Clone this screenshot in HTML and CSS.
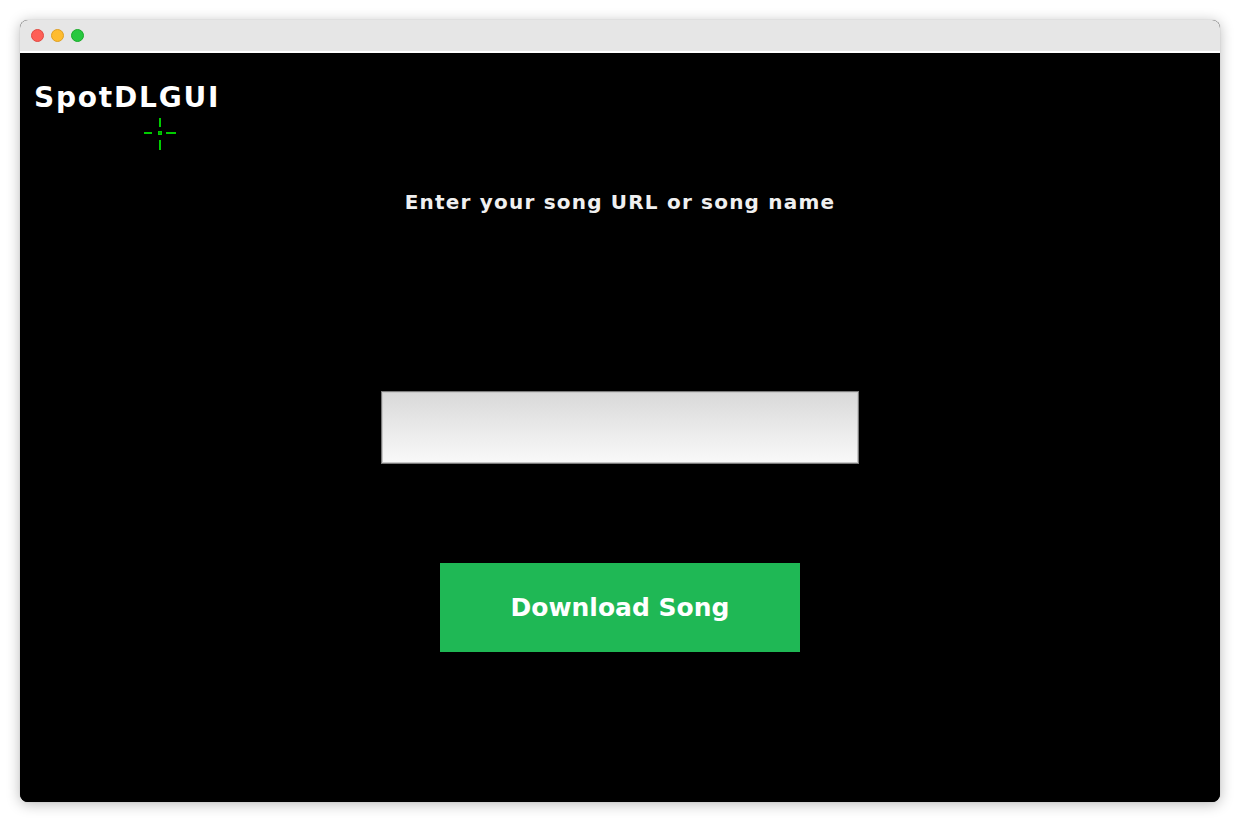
FILE: index.html
```html
<!DOCTYPE html>
<html lang="en">
<head>
<meta charset="utf-8">
<title>SpotDLGUI</title>
<link rel="stylesheet" href="styles.css">
</head>
<body>
<div class="window">
  <div class="titlebar">
    <span class="light red"></span>
    <span class="light yellow"></span>
    <span class="light green"></span>
  </div>
  <div class="content">
    <h1 class="app-title">SpotDLGUI</h1>
    <p class="prompt">Enter your song URL or song name</p>
    <input class="song-input" type="text" aria-label="Song URL or name">
    <button class="download-btn" type="button">Download Song</button>
    <svg class="crosshair" width="34" height="34" viewBox="0 0 34 34" aria-hidden="true">
      <g stroke="#00cc00" stroke-width="2" fill="none">
        <line x1="16" y1="0" x2="16" y2="9"/>
        <line x1="16" y1="22" x2="16" y2="32"/>
        <line x1="0" y1="15" x2="8" y2="15"/>
        <line x1="22" y1="15" x2="32" y2="15"/>
      </g>
      <rect x="14.5" y="13.5" width="3" height="3" fill="#00aa00" stroke="#00cc00" stroke-width="1"/>
    </svg>
  </div>
</div>
</body>
</html>
```
FILE: styles.css
```css
html, body {
  margin: 0;
  padding: 0;
  background: #ffffff;
}
body {
  width: 1240px;
  height: 822px;
  overflow: hidden;
  font-family: "DejaVu Sans", "Open Sans", sans-serif;
}
.window {
  margin: 20px 0 0 20px;
  width: 1200px;
  height: 782px;
  border-radius: 8px;
  overflow: hidden;
  box-shadow: 0 2px 14px rgba(0, 0, 0, 0.28), 0 0 1px rgba(0,0,0,0.3);
  display: flex;
  flex-direction: column;
  background: #000;
}
.titlebar {
  height: 31px;
  flex: none;
  background: #e6e6e6;
  border-bottom: 2px solid #ffffff;
  display: flex;
  align-items: center;
  gap: 7px;
  padding-left: 11px;
}
.light {
  width: 13px;
  height: 13px;
  border-radius: 50%;
  display: block;
  box-sizing: border-box;
}
.light.red { background: #fe5f57; border: 1px solid #e14942; }
.light.yellow { background: #febc2e; border: 1px solid #dfa023; }
.light.green { background: #28c840; border: 1px solid #1aab29; }

.content {
  position: relative;
  flex: 1;
  background: #000;
  display: flex;
  flex-direction: column;
  align-items: center;
  padding-top: 29px;
}
.app-title {
  align-self: flex-start;
  margin: 0 0 0 14px;
  font-size: 28px;
  line-height: 32px;
  font-weight: 700;
  color: #ffffff;
  letter-spacing: 1.8px;
}
.prompt {
  margin: 76px 0 0 0;
  font-size: 20px;
  line-height: 24px;
  font-weight: 700;
  color: #f0f0f0;
  letter-spacing: 1.2px;
}
.song-input {
  margin-top: 177px;
  width: 478px;
  height: 73px;
  box-sizing: border-box;
  border: 1px solid #7a7a7a;
  box-shadow: inset 0 0 0 1px #c8c8c8;
  background: linear-gradient(#d8d8d8, #e6e6e6 40%, #f9f9f9);
  outline: none;
  padding: 0 10px;
  font-family: inherit;
  font-size: 18px;
}
.download-btn {
  margin-top: 99px;
  width: 360px;
  height: 89px;
  border: none;
  background: #1fb855;
  color: #ffffff;
  font-family: inherit;
  font-size: 25px;
  font-weight: 700;
  letter-spacing: 0;
  cursor: pointer;
}
.crosshair {
  position: absolute;
  left: 124px;
  top: 65px;
}
```
